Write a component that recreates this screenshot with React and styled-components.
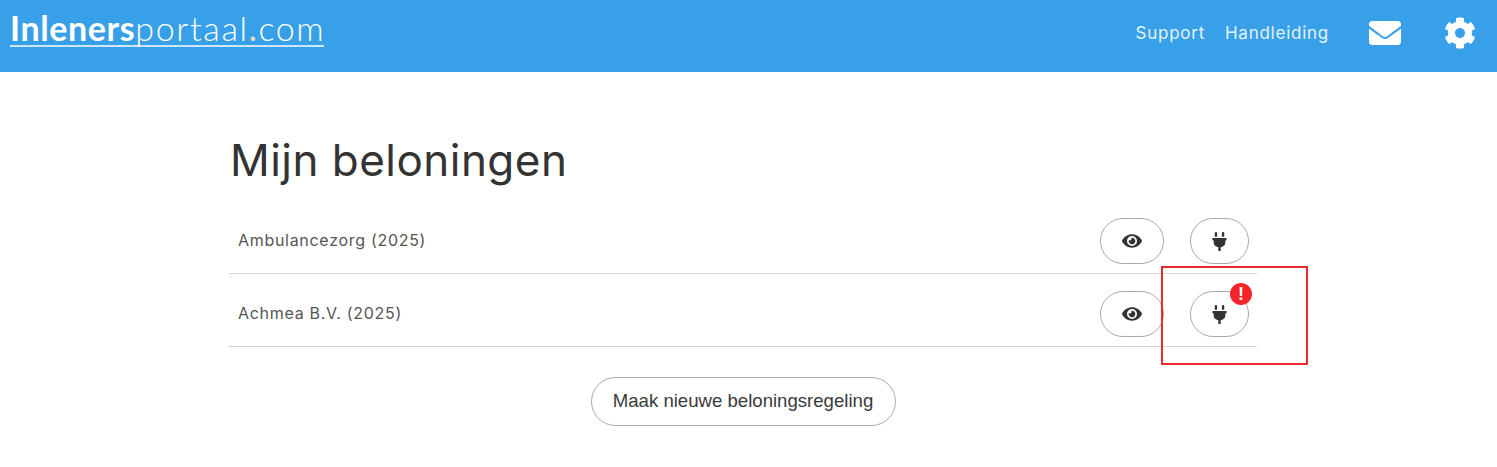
import React from 'react';
import styled, { createGlobalStyle } from 'styled-components';
import { FaEnvelope, FaCog, FaEye, FaPlug } from 'react-icons/fa';

const GlobalStyle = createGlobalStyle`
  html, body {
    margin: 0;
    padding: 0;
    background: #fff;
    font-family: Inter, "Open Sans", sans-serif;
  }
`;

const Page = styled.div`
  position: relative;
  width: 1497px;
  height: 467px;
  overflow: hidden;
`;

const Header = styled.header`
  height: 72px;
  background: #38a0e8;
  display: flex;
  justify-content: space-between;
  align-items: flex-start;
  color: #fff;
`;

const Logo = styled.a`
  margin: 10px 0 0 10px;
  height: 35px;
  width: 314px;
  border-bottom: 2px solid #cde7fa;
  font-family: Lato, sans-serif;
  font-size: 34px;
  line-height: 36px;
  letter-spacing: 1.65px;
  font-weight: 300;
  color: #fff;
  white-space: nowrap;
`;

const LogoBold = styled.span`
  font-weight: 700;
  letter-spacing: 0.6px;
`;

const LogoDot = styled.span`
  color: #f9dcc0;
  font-weight: 400;
`;

const Nav = styled.nav`
  display: flex;
  align-items: center;
  height: 66px;
  padding-right: 21px;
  font-size: 17px;
`;

const NavLink = styled.a`
  margin-right: 20px;
  color: #e4f2fd;
  letter-spacing: 0.75px;
  &:last-of-type {
    margin-right: 40px;
  }
`;

const NavIcon = styled.span`
  display: flex;
  color: #fff;
  margin-left: ${p => p.$gap || 0}px;
  font-size: ${p => p.$size}px;
`;

const Main = styled.main`
  width: 1028px;
  margin-left: 229px;
`;

const Title = styled.h1`
  margin: 59px 0 0 1px;
  height: 87px;
  font-size: 44px;
  line-height: 58px;
  font-weight: 400;
  color: #333;
  letter-spacing: 0.47px;
`;

const Row = styled.div`
  display: flex;
  align-items: flex-start;
  justify-content: space-between;
  height: 55px;
  padding-top: ${p => p.$first ? 0 : 17}px;
  border-bottom: 1px solid #d4d4d4;
`;

const RowName = styled.span`
  margin: 12px 0 0 9px;
  font-size: 16px;
  line-height: 20px;
  color: #555;
  letter-spacing: 0.7px;
`;

const Actions = styled.div`
  display: flex;
  gap: 26px;
  margin-right: 8px;
`;

const IconButton = styled.button`
  position: relative;
  width: ${p => p.$w}px;
  height: 46px;
  padding: 0;
  display: flex;
  align-items: center;
  justify-content: center;
  background: #fff;
  border: 1px solid #a8a8a8;
  border-radius: 23px;
  color: #333;
  font-size: ${p => p.$icon}px;
`;

const Badge = styled.span`
  position: absolute;
  top: -9px;
  right: -4px;
  width: 22px;
  height: 22px;
  border-radius: 50%;
  background: #f4252a;
  color: #fff;
  font-family: "Liberation Sans", sans-serif;
  font-size: 18px;
  font-weight: 700;
  line-height: 22px;
  text-align: center;
`;

const Footer = styled.div`
  display: flex;
  justify-content: center;
  margin-top: 30px;
`;

const NewButton = styled.button`
  width: 305px;
  height: 49px;
  padding: 0 0 1px;
  background: #fff;
  border: 1px solid #a8a8a8;
  border-radius: 25px;
  font-family: "Liberation Sans", sans-serif;
  font-size: 18.6px;
  color: #3a3a3a;
`;

const Marker = styled.div`
  position: absolute;
  left: 1161px;
  top: 266px;
  width: 143px;
  height: 95px;
  border: 2px solid #ea2a2e;
`;

const rows = [
  { name: 'Ambulancezorg (2025)' },
  { name: 'Achmea B.V. (2025)', warning: true },
];

export default function App() {
  return (
    <Page>
      <GlobalStyle />
      <Header>
        <Logo><LogoBold>Inleners</LogoBold>portaal<LogoDot>.</LogoDot>com</Logo>
        <Nav>
          <NavLink>Support</NavLink>
          <NavLink>Handleiding</NavLink>
          <NavIcon $size={32}><FaEnvelope /></NavIcon>
          <NavIcon $size={32} $gap={43}><FaCog /></NavIcon>
        </Nav>
      </Header>
      <Main>
        <Title>Mijn beloningen</Title>
        {rows.map((row, i) => (
          <Row key={row.name} $first={i === 0}>
            <RowName>{row.name}</RowName>
            <Actions>
              <IconButton $w={64} $icon={20}><FaEye /></IconButton>
              <IconButton $w={59} $icon={19}>
                <FaPlug />
                {row.warning && <Badge>!</Badge>}
              </IconButton>
            </Actions>
          </Row>
        ))}
        <Footer>
          <NewButton>Maak nieuwe beloningsregeling</NewButton>
        </Footer>
      </Main>
      <Marker />
    </Page>
  );
}
